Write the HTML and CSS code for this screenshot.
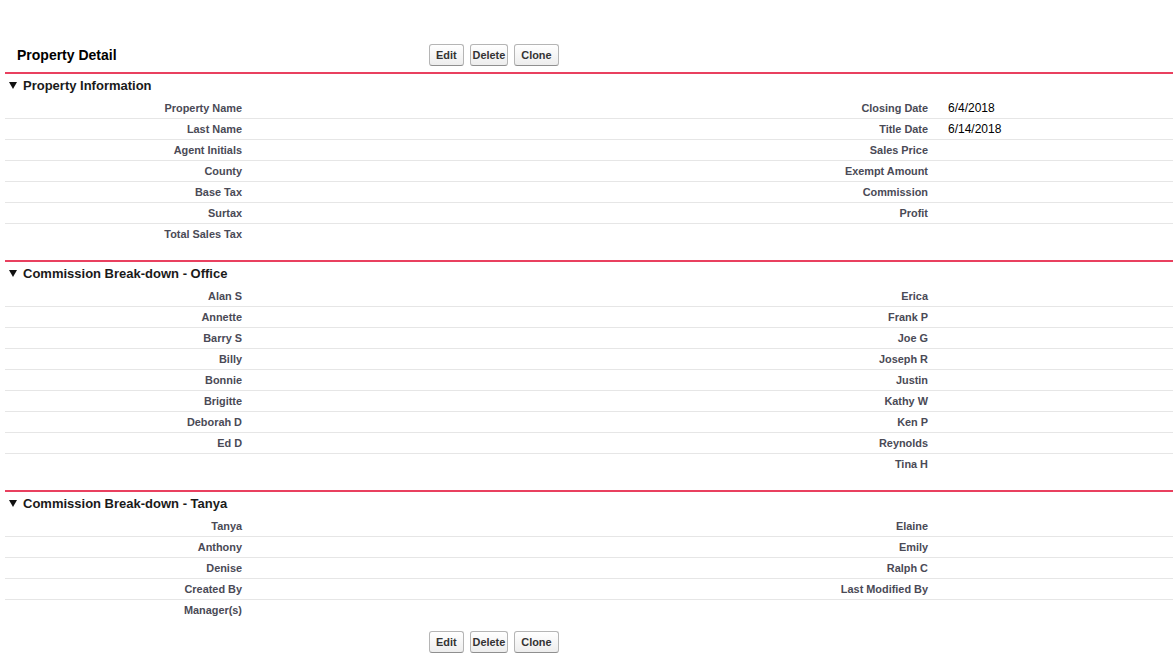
FILE: index.html
```html
<!DOCTYPE html>
<html lang="en">
<head>
  <meta charset="UTF-8">
  <title>Property Detail</title>
  <link rel="stylesheet" href="styles.css">
</head>
<body>

  <div class="page">
    <div class="detail-head">
      <h2 class="detail-title">Property Detail</h2>
      <div class="btn-row">
        <button class="btn">Edit</button>
        <button class="btn btn-tight">Delete</button>
        <button class="btn">Clone</button>
      </div>
    </div>

    <!-- Property Information -->
    <section class="block">
      <h3 class="block-title">
        <svg class="twisty" width="8" height="7" viewBox="0 0 8 7"><polygon points="0,0 8,0 4,7" fill="#111"/></svg>
        Property Information
      </h3>
      <div class="fields">
        <div class="row"><span class="lbl">Property Name</span><span class="val"></span><span class="lbl">Closing Date</span><span class="val">6/4/2018</span></div>
        <div class="row"><span class="lbl">Last Name</span><span class="val"></span><span class="lbl">Title Date</span><span class="val">6/14/2018</span></div>
        <div class="row"><span class="lbl">Agent Initials</span><span class="val"></span><span class="lbl">Sales Price</span><span class="val"></span></div>
        <div class="row"><span class="lbl">County</span><span class="val"></span><span class="lbl">Exempt Amount</span><span class="val"></span></div>
        <div class="row"><span class="lbl">Base Tax</span><span class="val"></span><span class="lbl">Commission</span><span class="val"></span></div>
        <div class="row"><span class="lbl">Surtax</span><span class="val"></span><span class="lbl">Profit</span><span class="val"></span></div>
        <div class="row"><span class="lbl">Total Sales Tax</span><span class="val"></span><span class="lbl"></span><span class="val"></span></div>
      </div>
    </section>

    <!-- Commission Break-down - Office -->
    <section class="block">
      <h3 class="block-title">
        <svg class="twisty" width="8" height="7" viewBox="0 0 8 7"><polygon points="0,0 8,0 4,7" fill="#111"/></svg>
        Commission Break-down - Office
      </h3>
      <div class="fields">
        <div class="row"><span class="lbl">Alan S</span><span class="val"></span><span class="lbl">Erica</span><span class="val"></span></div>
        <div class="row"><span class="lbl">Annette</span><span class="val"></span><span class="lbl">Frank P</span><span class="val"></span></div>
        <div class="row"><span class="lbl">Barry S</span><span class="val"></span><span class="lbl">Joe G</span><span class="val"></span></div>
        <div class="row"><span class="lbl">Billy</span><span class="val"></span><span class="lbl">Joseph R</span><span class="val"></span></div>
        <div class="row"><span class="lbl">Bonnie</span><span class="val"></span><span class="lbl">Justin</span><span class="val"></span></div>
        <div class="row"><span class="lbl">Brigitte</span><span class="val"></span><span class="lbl">Kathy W</span><span class="val"></span></div>
        <div class="row"><span class="lbl">Deborah D</span><span class="val"></span><span class="lbl">Ken P</span><span class="val"></span></div>
        <div class="row"><span class="lbl">Ed D</span><span class="val"></span><span class="lbl">Reynolds</span><span class="val"></span></div>
        <div class="row"><span class="lbl"></span><span class="val"></span><span class="lbl">Tina H</span><span class="val"></span></div>
      </div>
    </section>

    <!-- Commission Break-down - Tanya -->
    <section class="block block-last">
      <h3 class="block-title">
        <svg class="twisty" width="8" height="7" viewBox="0 0 8 7"><polygon points="0,0 8,0 4,7" fill="#111"/></svg>
        Commission Break-down - Tanya
      </h3>
      <div class="fields">
        <div class="row"><span class="lbl">Tanya</span><span class="val"></span><span class="lbl">Elaine</span><span class="val"></span></div>
        <div class="row"><span class="lbl">Anthony</span><span class="val"></span><span class="lbl">Emily</span><span class="val"></span></div>
        <div class="row"><span class="lbl">Denise</span><span class="val"></span><span class="lbl">Ralph C</span><span class="val"></span></div>
        <div class="row"><span class="lbl">Created By</span><span class="val"></span><span class="lbl">Last Modified By</span><span class="val"></span></div>
        <div class="row"><span class="lbl">Manager(s)</span><span class="val"></span><span class="lbl"></span><span class="val"></span></div>
      </div>
    </section>

    <div class="detail-foot">
      <div class="btn-row">
        <button class="btn">Edit</button>
        <button class="btn btn-tight">Delete</button>
        <button class="btn">Clone</button>
      </div>
    </div>
  </div>

</body>
</html>
```

FILE: styles.css
```css
body {
  margin: 0;
  font-family: "Liberation Sans", Arial, Helvetica, sans-serif;
  background-color: #fff;
  color: #000;
}

.page {
  padding: 44px 0 0 5px;
}

/* header bar with title and actions */
.detail-head {
  display: flex;
  align-items: center;
  height: 22px;
  margin-bottom: 6px;
}

.detail-title {
  margin: 0;
  width: 424px;
  padding-left: 12px;
  box-sizing: border-box;
  font-size: 14px;
  font-weight: bold;
  color: #000;
}

.btn-row {
  display: flex;
  gap: 6px;
}

.btn {
  height: 22px;
  box-sizing: border-box;
  padding: 0 6px;
  font-family: "Liberation Sans", Arial, Helvetica, sans-serif;
  font-size: 10.9px;
  font-weight: bold;
  color: #333;
  background: linear-gradient(#ffffff, #ededed);
  border: 1px solid #b5b5b5;
  border-bottom-color: #8f8f8f;
  border-radius: 3px;
}

.btn-tight {
  padding: 0 2px;
}

/* sections */
.block {
  border-top: 2px solid #e9405f;
  padding-bottom: 15px;
}

.block-last {
  padding-bottom: 0;
}

.block-title {
  display: flex;
  align-items: center;
  gap: 6px;
  height: 24px;
  margin: 0;
  padding: 0 0 2px 4px;
  box-sizing: border-box;
  font-size: 13px;
  font-weight: bold;
  color: #1a1a1a;
}

.twisty {
  flex: none;
  margin-top: 1px;
}

.fields {
  display: flex;
  flex-direction: column;
}

.row {
  display: grid;
  grid-template-columns: 245px 436px 250px 1fr;
  height: 21px;
  box-sizing: border-box;
  border-bottom: 1px solid #e6e6e6;
}

.row:last-child {
  border-bottom-color: transparent;
}

.lbl {
  text-align: right;
  padding-right: 8px;
  font-size: 10.9px;
  font-weight: bold;
  line-height: 20px;
  color: #4a4a56;
}

.val {
  padding-left: 12px;
  font-size: 12px;
  line-height: 20px;
  color: #000;
}

.detail-foot {
  padding: 10px 0 0 424px;
}
```
